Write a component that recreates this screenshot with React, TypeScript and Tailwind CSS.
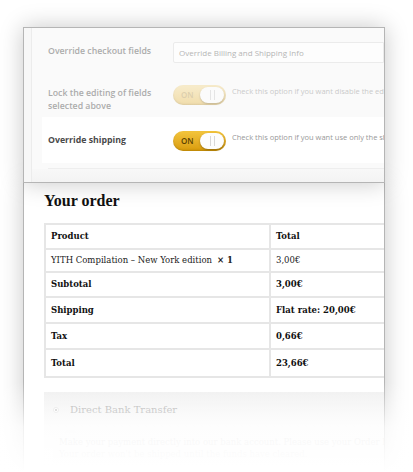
import React from 'react'

const sans = { fontFamily: '"Open Sans", "DejaVu Sans", sans-serif' }
const serif = { fontFamily: '"DejaVu Serif", "Liberation Serif", serif' }

function Toggle({ faded }: { faded?: boolean }) {
  return (
    <div
      className={`flex h-[20px] w-[53px] shrink-0 items-center justify-between rounded-full pl-[8px] pr-[2px] shadow-[inset_0_-1px_2px_rgba(0,0,0,0.15)] ${
        faded
          ? 'bg-gradient-to-b from-[#f6e3ad] to-[#eccb78]'
          : 'bg-gradient-to-b from-[#f3c53c] to-[#d99c06]'
      }`}
    >
      <span
        className={`text-[8px] font-semibold ${faded ? 'text-[#c9b27a]' : 'text-[#5a4200]'}`}
        style={sans}
      >
        ON
      </span>
      <span className="flex h-[16px] w-[24px] items-center justify-center gap-[3px] rounded-full bg-[#fdfdfd] shadow-[0_1px_2px_rgba(0,0,0,0.3)]">
        <span className="h-[10px] w-[1px] bg-[#d8d8d8]" />
        <span className="h-[10px] w-[1px] bg-[#d8d8d8]" />
      </span>
    </div>
  )
}

const rows: { label: string; value: string; bold: boolean; h: number }[] = [
  { label: 'YITH Compilation – New York edition', value: '3,00€', bold: false, h: 23 },
  { label: 'Subtotal', value: '3,00€', bold: true, h: 25 },
  { label: 'Shipping', value: 'Flat rate: 20,00€', bold: true, h: 26 },
  { label: 'Tax', value: '0,66€', bold: true, h: 26 },
  { label: 'Total', value: '23,66€', bold: true, h: 26 },
]

export default function App() {
  return (
    <div className="relative h-[472px] w-[413px] overflow-hidden bg-white">
      <div className="pl-[23px] pt-[27px]">
        {/* Settings panel */}
        <div className="relative z-10 h-[156px] w-[362px] overflow-hidden border border-[#b5b5b5] bg-[#f7f7f7] shadow-[0_0_22px_rgba(0,0,0,0.22)]">
          <div className="ml-[7px] h-full border-l border-[#ececec] bg-[#fafafa]">
            {/* faded rows */}
            <div className="opacity-60">
              <div className="flex items-start pl-[16px] pt-[14px]">
                <div className="w-[125px] shrink-0 whitespace-nowrap pt-[3px] text-[8.75px] font-semibold text-[#777]" style={sans}>
                  Override checkout fields
                </div>
                <div
                  className="flex h-[21px] flex-1 items-center rounded-l-[2px] border border-[#e2e2e2] bg-white pl-[5px] text-[8px] text-[#888]"
                  style={sans}
                >
                  Override Billing and Shipping Info
                </div>
              </div>
              <div className="flex items-start pl-[16px] pt-[22px]">
                <div className="w-[125px] shrink-0 whitespace-nowrap pt-[2px] text-[8.75px] font-semibold leading-[13px] text-[#777]" style={sans}>
                  Lock the editing of fields
                  <br />
                  selected above
                </div>
                <Toggle faded />
                <div className="ml-[6px] mt-[1px] whitespace-nowrap text-[7.5px] text-[#aaa]" style={sans}>
                  Check this option if you want disable the editing
                </div>
              </div>
            </div>
            <div className="ml-[10px] mt-[4px] flex h-[46px] items-start bg-white pl-[6px] pt-[14px]">
              <div className="w-[125px] shrink-0 whitespace-nowrap pt-[3px] text-[8.75px] font-bold text-[#4a4a4a]" style={sans}>
                Override shipping
              </div>
              <Toggle />
              <div className="ml-[6px] mt-[1px] whitespace-nowrap text-[7.5px] text-[#999]" style={sans}>
                Check this option if you want use only the shipping
              </div>
            </div>
            <div className="ml-[16px] mt-[5px] h-[1px] bg-[#eeeeee]" />
            <div className="h-[25px] bg-gradient-to-b from-[#f8f8f8] to-[#efefef]" />
          </div>
        </div>

        {/* Order panel */}
        <div className="relative h-[320px] w-[362px] overflow-hidden border-x border-[#b5b5b5] bg-white shadow-[0_0_22px_rgba(0,0,0,0.22)]">
          <div className="pl-[20px] pt-[6px]">
            <div
              className="text-[16px] font-bold text-[#111]"
              style={{ fontFamily: '"Liberation Serif", "DejaVu Serif", serif' }}
            >
              Your order
            </div>
            <div className="mt-[10px] border-y-2 border-l-2 border-[#e6e6e6]" style={serif}>
              <div className="flex h-[25px] items-center border-b-2 border-[#e6e6e6] text-[8.5px] font-bold text-[#111]">
                <div className="w-[225px] border-r-2 border-[#e6e6e6] pl-[5px] leading-[25px]">Product</div>
                <div className="pl-[5px]">Total</div>
              </div>
              {rows.map((r, i) => (
                <div
                  key={r.label}
                  className={`flex items-center text-[8.5px] text-[#222] ${i < rows.length - 1 ? 'border-b-2 border-[#e6e6e6]' : ''}`}
                  style={{ height: r.h }}
                >
                  <div
                    className={`flex h-full w-[225px] items-center border-r-2 border-[#e6e6e6] pl-[5px] ${r.bold ? 'font-bold text-[#111]' : ''}`}
                  >
                    {r.label}
                    {!r.bold && <span className="ml-[5px] font-bold">× 1</span>}
                  </div>
                  <div className={`pl-[5px] ${r.bold ? 'font-bold text-[#111]' : ''}`}>{r.value}</div>
                </div>
              ))}
            </div>
            <div className="mt-[14px] h-[80px] bg-gradient-to-b from-[#efefef] to-white pl-[9px] pt-[10px]">
              <div className="flex items-center gap-[11px] text-[10px] text-[#999]" style={serif}>
                <span className="flex h-[6px] w-[6px] items-center justify-center rounded-full border border-[#ddd] bg-white">
                  <span className="h-[2px] w-[2px] rounded-full bg-[#aaa]" />
                </span>
                Direct Bank Transfer
              </div>
              <div className="ml-[12px] mt-[10px] h-0 w-0 border-x-[6px] border-b-[6px] border-x-transparent border-b-[#f4f4f4]" />
              <div className="overflow-hidden bg-[#f7f7f7] px-[6px] py-[3px] text-[8.5px] leading-[12px] text-[#ccc]" style={serif}>
                <div className="whitespace-nowrap">Make your payment directly into our bank account. Please use your Order ID</div>
                <div className="whitespace-nowrap">Your order won't be shipped until the funds have cleared.</div>
              </div>
            </div>
          </div>
        </div>
      </div>
      {/* bottom fade */}
      <div className="pointer-events-none absolute bottom-0 left-0 h-[90px] w-full bg-gradient-to-b from-transparent via-white/80 to-white" />
    </div>
  )
}
